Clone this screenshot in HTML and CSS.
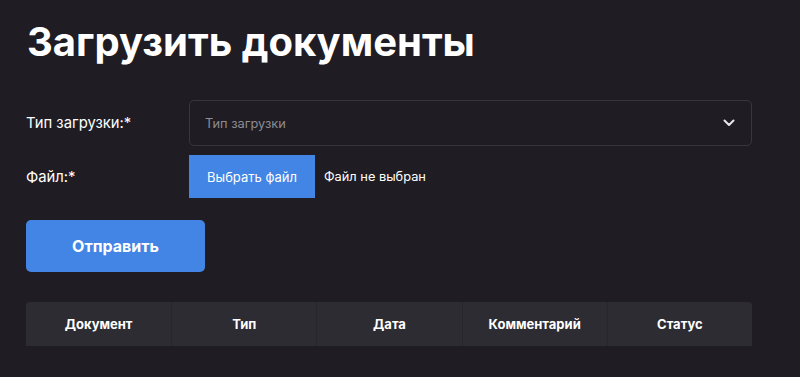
FILE: index.html
```html
<!DOCTYPE html>
<html lang="ru">
<head>
<meta charset="UTF-8">
<title>Загрузить документы</title>
<link rel="stylesheet" href="styles.css">
</head>
<body>
<div class="page">
  <h1 class="title">Загрузить документы</h1>
  <form class="upload-form">
    <div class="form-row">
      <label class="form-label">Тип загрузки:*</label>
      <div class="select">
        <span class="select-placeholder">Тип загрузки</span>
        <svg class="select-arrow" width="12" height="8" viewBox="0 0 12 8">
          <path d="M1.5 1.5 L6 6 L10.5 1.5" fill="none" stroke="#e6e6ea" stroke-width="2" stroke-linecap="round" stroke-linejoin="round"/>
        </svg>
      </div>
    </div>
    <div class="form-row form-row-file">
      <label class="form-label">Файл:*</label>
      <div class="file-input">
        <span class="file-button">Выбрать файл</span>
        <span class="file-name">Файл не выбран</span>
      </div>
    </div>
    <button type="button" class="submit">Отправить</button>
  </form>
  <div class="table">
    <div class="table-head">
      <div class="th">Документ</div>
      <div class="th">Тип</div>
      <div class="th">Дата</div>
      <div class="th">Комментарий</div>
      <div class="th">Статус</div>
    </div>
  </div>
</div>
</body>
</html>
```

FILE: styles.css
```css
html, body {
    margin: 0;
    height: 100%;
}
body {
    background: #1f1d23;
    color: #fff;
    font-family: Inter, "Noto Sans", sans-serif;
}
.page {
    width: 726px;
    padding: 14px 0 0 26px;
}
.title {
    margin: 0 0 30px 1px;
    font-size: 40px;
    font-weight: 700;
    line-height: 56px;
}
.upload-form {
    display: flex;
    flex-direction: column;
}
.form-row {
    display: flex;
    align-items: center;
}
.form-row-file {
    margin-top: 9px;
}
.form-label {
    width: 163px;
    font-size: 14.8px;
}
.select {
    flex: 1;
    height: 44px;
    display: flex;
    align-items: center;
    justify-content: space-between;
    padding: 0 16px 0 15px;
    border: 1px solid #37363c;
    border-radius: 5px;
}
.select-placeholder {
    color: #8d8c92;
    font-size: 12.8px;
}
.file-input {
    display: flex;
    align-items: center;
}
.file-button {
    width: 126px;
    height: 43px;
    display: flex;
    align-items: center;
    justify-content: center;
    background: #4285e4;
    font-size: 13px;
}
.file-name {
    margin-left: 9px;
    font-size: 12.8px;
}
.submit {
    align-self: flex-start;
    width: 179px;
    height: 52px;
    margin-top: 22px;
    border: none;
    border-radius: 5px;
    background: #4285e4;
    color: #fff;
    font-family: inherit;
    font-size: 16px;
    font-weight: 700;
}
.table {
    margin-top: 30px;
}
.table-head {
    display: grid;
    grid-template-columns: repeat(5, 1fr);
    height: 44px;
    background: #2d2c32;
    border-radius: 4px 4px 0 0;
}
.th {
    display: flex;
    align-items: center;
    justify-content: center;
    font-size: 13px;
    font-weight: 700;
    border-left: 1px solid #27262b;
}
.th:first-child {
    border-left: none;
}
```
